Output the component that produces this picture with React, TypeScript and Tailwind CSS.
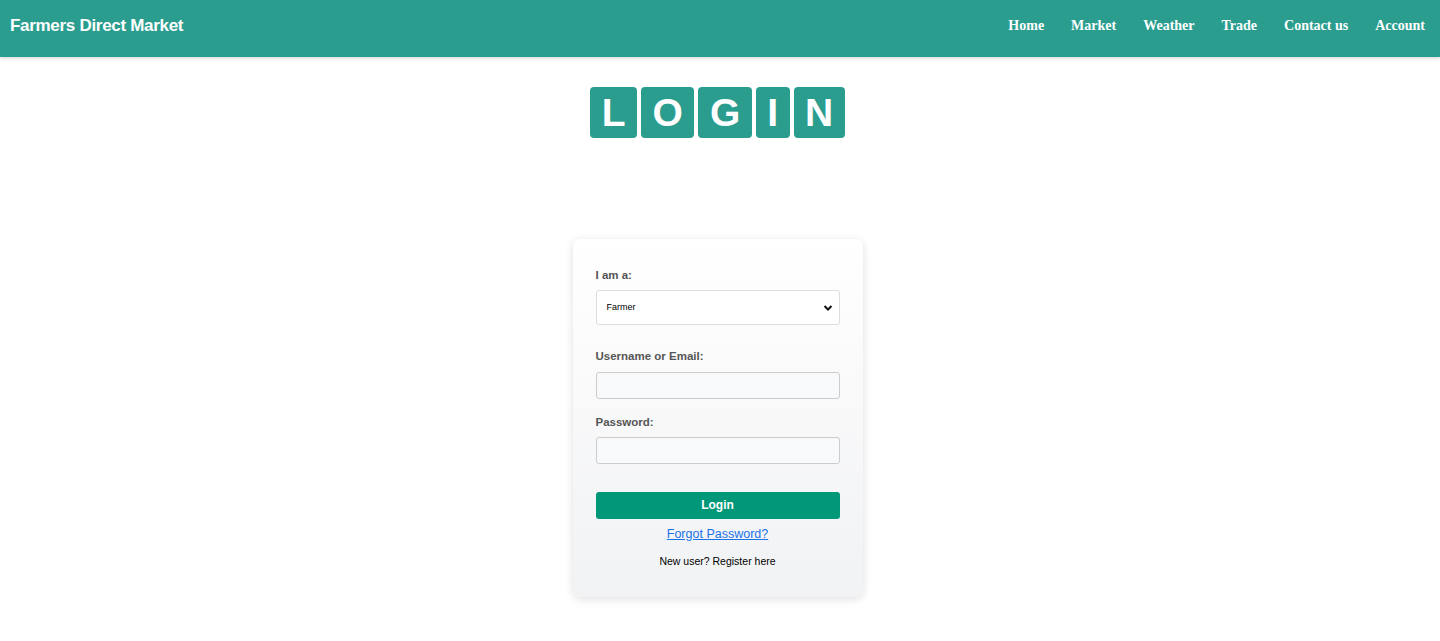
import React from 'react';

const navLinks = ['Home', 'Market', 'Weather', 'Trade', 'Contact us', 'Account'];
const letters = ['L', 'O', 'G', 'I', 'N'];

const App: React.FC = () => {
  return (
    <div className="min-h-[641px] bg-white font-['Liberation_Sans',Arial,sans-serif]">
      <header className="h-[57px] bg-[#2a9d8f] flex items-center justify-between pl-[10px] pr-[15px] pb-[6px] shadow-[0_2px_3px_rgba(0,0,0,0.12)]">
        <h1 className="text-white font-bold text-[17px] tracking-[-0.3px]">Farmers Direct Market</h1>
        <nav className="flex gap-[27px]">
          {navLinks.map((link) => (
            <a key={link} href="#" className="text-white font-bold text-[14px] font-['Liberation_Serif','Times_New_Roman',serif]">
              {link}
            </a>
          ))}
        </nav>
      </header>

      <main className="pr-[5px]">
        <div className="flex justify-center gap-[4px] mt-[30px]">
          {letters.map((l) => (
            <span
              key={l}
              className="bg-[#2a9d8f] text-white font-bold text-[39px] leading-[51px] h-[51px] px-[11.5px] rounded-[4px]"
            >
              {l}
            </span>
          ))}
        </div>

        <div className="flex justify-center mt-[101px]">
          <div className="w-[290px] rounded-[8px] bg-gradient-to-b from-white to-[#f1f2f4] shadow-[0_2px_10px_rgba(0,0,0,0.13)] px-[23px] pt-[28px] pb-[27px]">
            <label className="block text-[11.5px] font-bold text-[#555] mb-[6px]">I am a:</label>
            <div className="relative h-[35px] bg-white border border-[#ddd] rounded-[3px] flex items-center px-[10px] mb-[23px]">
              <span className="text-[9px] text-black">Farmer</span>
              <svg className="absolute right-[6px] top-[13px]" width="10" height="8" viewBox="0 0 10 8">
                <path d="M1.5 2 L5 5.5 L8.5 2" fill="none" stroke="#111" strokeWidth="2" />
              </svg>
            </div>
            <label className="block text-[11.5px] font-bold text-[#555] mb-[6px]">Username or Email:</label>
            <input className="block w-full h-[27px] border border-[#ccc] rounded-[3px] bg-[#f8f9fa] mb-[15px]" />
            <label className="block text-[11.5px] font-bold text-[#555] mb-[6px]">Password:</label>
            <input type="password" className="block w-full h-[27px] border border-[#ccc] rounded-[3px] bg-[#f8f9fa] mb-[28px]" />
            <button className="w-full h-[27px] rounded-[3px] bg-[#009879] text-white text-[12px] font-bold">Login</button>
            <div className="text-center mt-[2px]">
              <a href="#" className="text-[12.5px] text-[#1a73e8] underline">Forgot Password?</a>
            </div>
            <p className="text-center text-[10.5px] text-black mt-[9px]">New user? Register here</p>
          </div>
        </div>
      </main>
    </div>
  );
};

export default App;
